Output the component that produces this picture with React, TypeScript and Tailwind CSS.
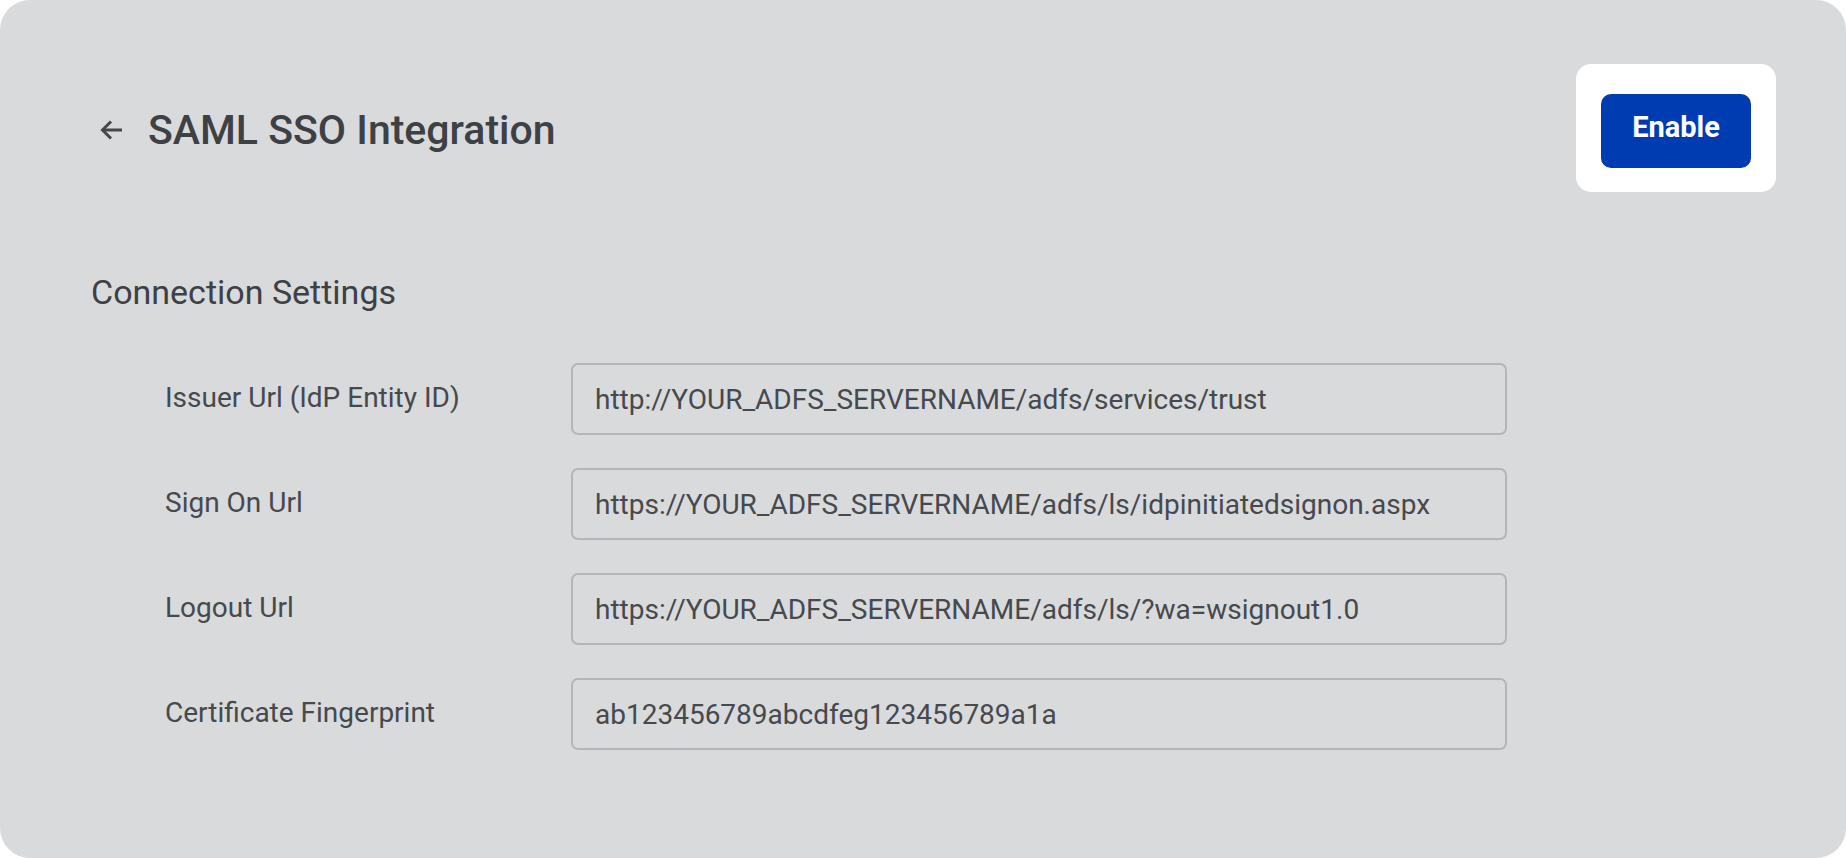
const fields = [
  { label: 'Issuer Url (IdP Entity ID)', value: 'http://YOUR_ADFS_SERVERNAME/adfs/services/trust' },
  { label: 'Sign On Url', value: 'https://YOUR_ADFS_SERVERNAME/adfs/ls/idpinitiatedsignon.aspx' },
  { label: 'Logout Url', value: 'https://YOUR_ADFS_SERVERNAME/adfs/ls/?wa=wsignout1.0' },
  { label: 'Certificate Fingerprint', value: 'ab123456789abcdfeg123456789a1a' },
];

function BackArrow() {
  return (
    <svg width="22" height="20" viewBox="0 0 22 20" fill="none" className="text-[#44474b]">
      <path d="M22 10H3" stroke="currentColor" strokeWidth="3" />
      <path d="M11 1.5L2.5 10l8.5 8.5" stroke="currentColor" strokeWidth="3" />
    </svg>
  );
}

export default function App() {
  return (
    <div className="min-h-screen bg-white font-['Roboto','Liberation_Sans',sans-serif]">
      <div className="h-[858px] w-full rounded-[30px] bg-[#d9dadc] pl-[91px] pr-[70px] pt-[64px]">
        {/* Header */}
        <div className="flex items-center justify-between">
          <div className="flex items-center">
            <button className="ml-[9px] mt-[4px] flex cursor-pointer items-center">
              <BackArrow />
            </button>
            <h1 className="ml-[26px] mt-[3px] text-[41px] leading-[48px] font-medium text-[#3d4044]">SAML SSO Integration</h1>
          </div>
          <div className="rounded-[15px] bg-white px-[25px] pt-[30px] pb-[24px]">
            <button className="flex h-[74px] w-[150px] cursor-pointer items-center justify-center rounded-[10px] bg-[#003cb1] pb-[6px] text-[29px] font-bold text-white">
              Enable
            </button>
          </div>
        </div>

        {/* Connection settings */}
        <h2 className="mt-[80px] text-[34px] leading-[40px] text-[#3d4044]">Connection Settings</h2>

        <div className="mt-[51px] flex flex-col gap-[33px] pl-[74px]">
          {fields.map((f) => (
            <div key={f.label} className="flex items-center">
              <label className="w-[406px] shrink-0 pb-[2px] text-[28px] text-[#46494d]">{f.label}</label>
              <input
                readOnly
                value={f.value}
                className="h-[72px] w-[936px] rounded-[7px] border-2 border-[#b4b5b7] bg-transparent px-[22px] text-[28px] text-[#46494d] outline-none"
              />
            </div>
          ))}
        </div>
      </div>
    </div>
  );
}
